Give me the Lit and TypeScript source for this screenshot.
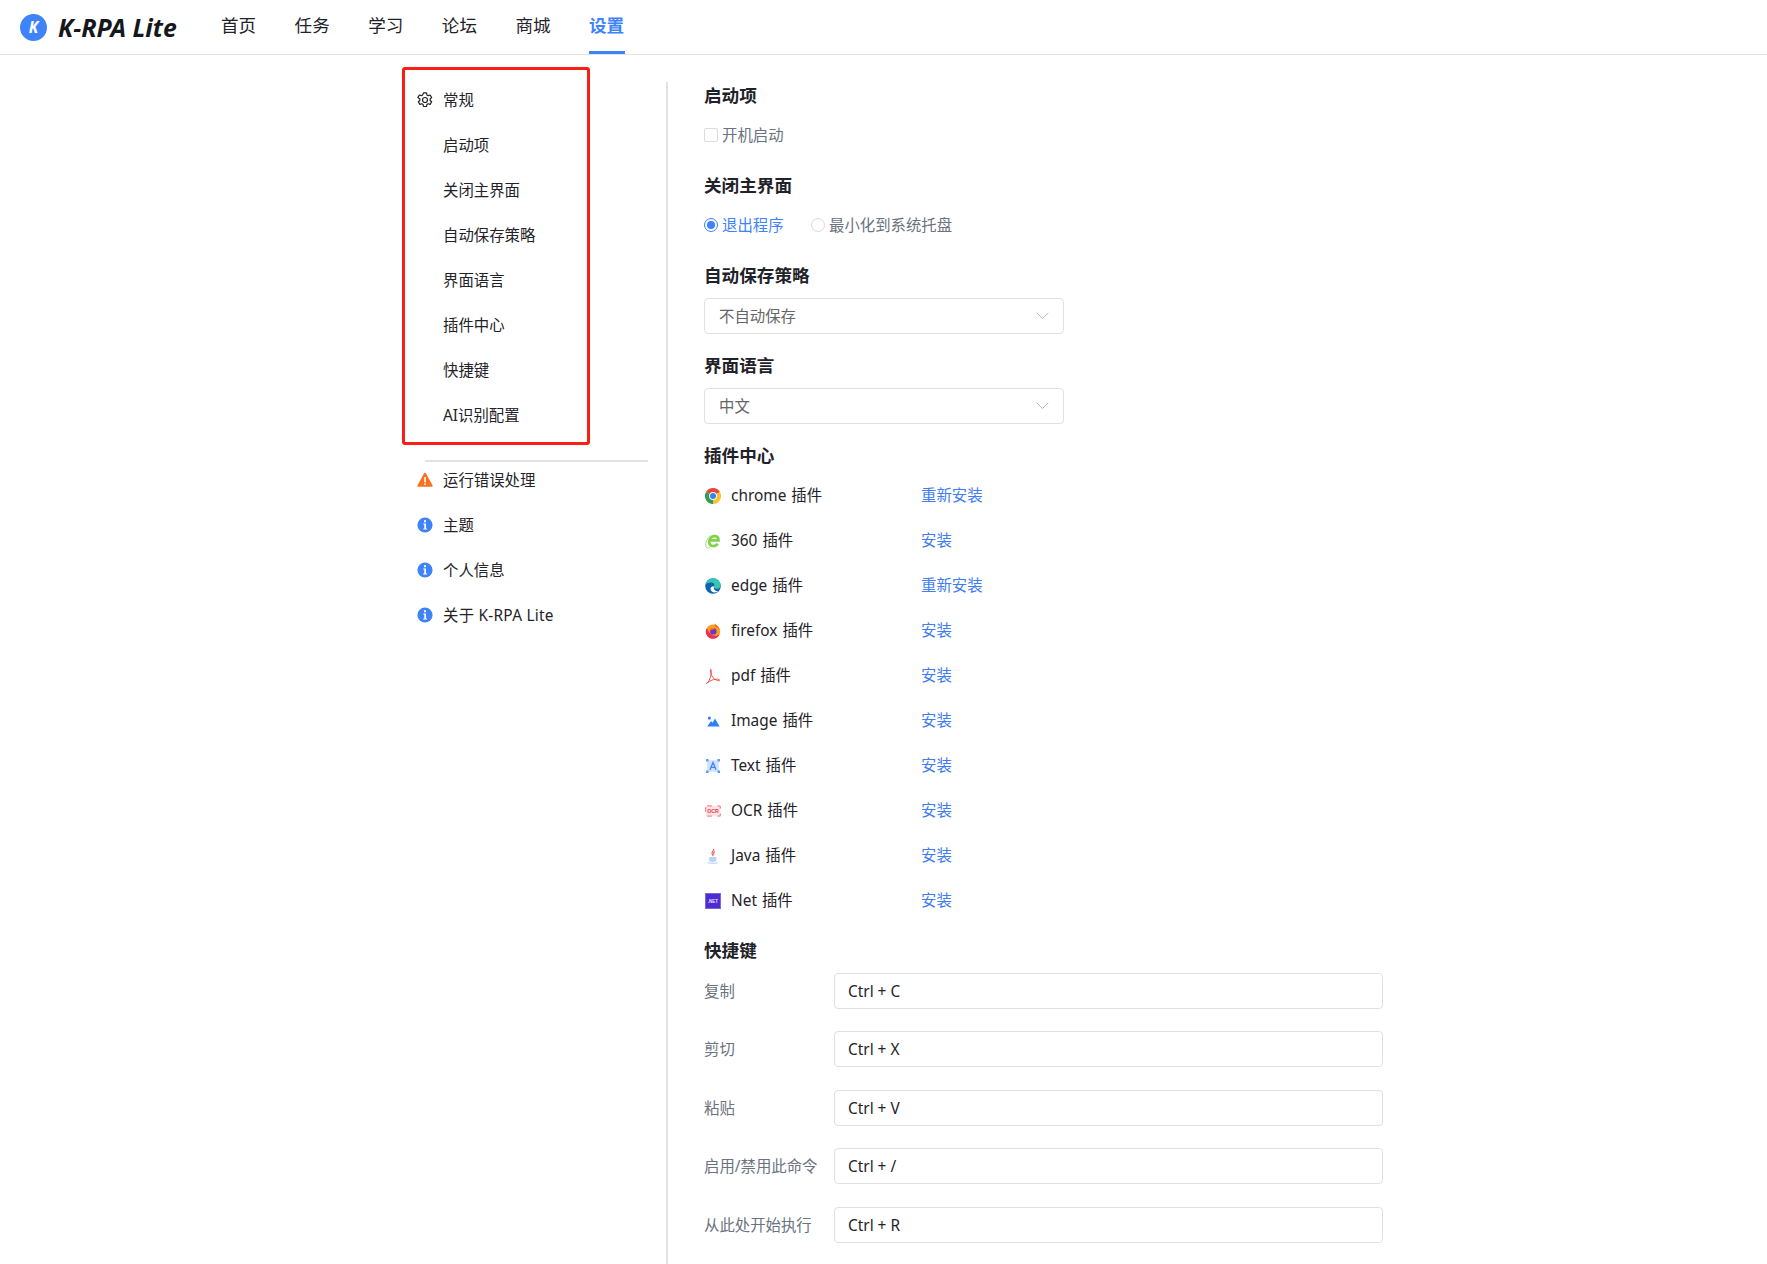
import { LitElement, html, css, svg } from "lit";
import { customElement } from "lit/decorators.js";

const icons: Record<string, any> = {
  gear: svg`<svg class="ni" viewBox="0 0 16 16" fill="none" stroke="#222" stroke-width="1.2" stroke-linejoin="round"><path d="M6.500.9h3l.4 2 1.300.75 1.950-.65 1.500 2.600-1.500 1.350v1.500l1.500 1.350-1.500 2.600-1.950-.65-1.300.75-.4 2h-3l-.4-2-1.300-.75-1.950.65-1.500-2.600 1.500-1.350v-1.500L.85 5.600l1.500-2.600 1.950.65 1.300-.75z"/><circle cx="8" cy="8" r="2.500"/></svg>`,
  warn: svg`<svg class="ni" viewBox="0 0 16 16"><path d="M8 .8c.4 0 .7.2.9.5l6.700 12.200c.3.6-.1 1.300-.8 1.300H1.200c-.7 0-1.100-.7-.8-1.300L7.100 1.300c.2-.3.5-.5.9-.5z" fill="#f9701e"/><rect x="7.200" y="5" width="1.600" height="5.400" fill="#fff"/><rect x="7.200" y="11.400" width="1.600" height="1.600" fill="#fff"/></svg>`,
  info: svg`<svg class="ni" viewBox="0 0 16 16"><circle cx="8" cy="8" r="7.600" fill="#3f83f8"/><rect x="7" y="3.200" width="2" height="2" fill="#fff"/><path d="M6.300 6.400H9v5h1v1.200H6.200v-1.200h1.100V7.600h-1z" fill="#fff"/></svg>`,
  chrome: svg`<svg class="pi" viewBox="0 0 16 16"><path d="M8 8L1.070 4A8 8 0 0 1 14.930 4Z" fill="#e4483a"/><path d="M8 8L14.930 4A8 8 0 0 1 8 16Z" fill="#f9c22e"/><path d="M8 8L8 16A8 8 0 0 1 1.070 4Z" fill="#2f9e50"/><circle cx="8" cy="8" r="3.900" fill="#fff"/><circle cx="8" cy="8" r="3" fill="#3f7de8"/></svg>`,
  ie: svg`<svg class="pi" viewBox="0 0 16 16" fill="none"><path d="M4.500 7.400H13.500C13.500 4.800 12 3.200 9.500 3.200 6.500 3.200 4.200 5.800 4.200 8.800c0 2.700 1.700 4.200 4.200 4.200 1.800 0 3.300-.8 4.100-2.400" stroke="#7ed348" stroke-width="2.700"/><path d="M5.500 2.500C2.200 5 .2 9.800.8 13.400c.3 1.900 2.500 2 4.300 1" stroke="#a5e07d" stroke-width="1"/></svg>`,
  edge: svg`<svg class="pi" viewBox="0 0 16 16"><circle cx="8" cy="8" r="7.800" fill="#0d63ad"/><path d="M.6 6.500C1.800 2.600 4.800.2 8 .2c4.400 0 7.800 3.400 7.800 7.800 0 1.800-1.800 2.800-3.800 2.800-1.800 0-3.200-.8-3.200-1.900 0-.6.600-.9.600-1.800 0-1.500-1.400-2.600-3.400-2.600C4 4.500 1.800 5.200.6 6.500z" fill="#36c6b4"/><path d="M8.800 8.200c-1.800-.2-3.300.8-3.300 2.500 0 2.100 2.200 3.700 4.500 3.700 1.200 0 2.300-.5 3.300-1.400-2.500.6-5-1-4.500-4.800z" fill="#fff"/></svg>`,
  firefox: svg`<svg class="pi" viewBox="0 0 16 16"><circle cx="8" cy="8.600" r="7.200" fill="#f9a11f"/><path d="M.8 8.600a7.200 7.200 0 0 0 14 2.400C12 14 6 13 4 9 3 7 2 6 1.500 5.500 1 6.400.8 7.500.8 8.600z" fill="#ed2f5b"/><path d="M9.800.5c1.800 1.400 4.500 3.500 5 6.500-1-2-3-3-4-3-1-1-1.500-2.200-1-3.500z" fill="#fd6a22"/><circle cx="8.300" cy="8.400" r="3.200" fill="#6e35c9"/><path d="M4.500 6.500c1.500-1.600 4-2 6-.5-1.500-.2-2.500.3-3 1-.8 0-2 .2-3-.5z" fill="#f9701e"/></svg>`,
  pdf: svg`<svg class="pi" viewBox="0 0 16 16" fill="none" stroke="#e8473f" stroke-width=".9"><path d="M5.800 1.200c-.7 0-.6 2.400.2 4.600 1 3 3 5.400 5.500 6.400 2 .8 3.500.6 3.200-.2-.3-.9-3.400-1-6.300-.3-3.300.8-6.200 2.800-6.900 3.500-.8.700.2 1 1.300-.5 1.800-2.400 3.500-7 3.500-11 0-1.500-.2-2.500-.5-2.500z"/></svg>`,
  image: svg`<svg class="pi" viewBox="0 0 16 16" fill="#2f80f6"><path d="M2.200 13.500L6 8l1.500 1.800L10 5.400l4.600 8.100z"/><rect x="3" y="3.700" width="2.700" height="2.700" rx=".5"/></svg>`,
  text: svg`<svg class="pi" viewBox="0 0 16 16"><rect x="2.200" y="2.200" width="11.600" height="11.600" fill="#cfe2fc"/><g fill="#5b9bf8"><rect x="1" y="1" width="2.500" height="2.500"/><rect x="12.500" y="1" width="2.500" height="2.500"/><rect x="1" y="12.500" width="2.500" height="2.500"/><rect x="12.500" y="12.500" width="2.500" height="2.500"/></g><path d="M5 11.800L8 4.500l3 7.300M6.100 9.300h3.800" fill="none" stroke="#3f83f8" stroke-width="1.300"/></svg>`,
  ocr: svg`<svg class="pi" viewBox="0 0 16 16" fill="none"><rect x=".6" y="2.800" width="14.800" height="10.400" rx="1.500" fill="#fde3e6" stroke="#f58a98" stroke-width="1.300" stroke-dasharray="4.800 5.500 4.800 5"/><text x="8" y="10" text-anchor="middle" font-family="Liberation Sans" font-weight="700" font-size="5.200" fill="#e23c52">OCR</text></svg>`,
  java: svg`<svg class="pi" viewBox="0 0 16 16" fill="none"><path d="M8.600.8C9.800 2.500 6.300 3.800 7 5.600c.3.900 1.300 1.200 1 2.500M9.700 3.400C8.300 4.300 8.600 5.500 9.200 6.300" stroke="#e8564c" stroke-width="1.100"/><path d="M4.200 9h7.200v3.600c0 .9-1 1.300-3.600 1.300s-3.600-.4-3.600-1.300z" fill="#b9d2f7"/><path d="M3 14.700c2.500.8 7.500.8 10 0" stroke="#a9c8f6" stroke-width=".9"/></svg>`,
  net: svg`<svg class="pi" viewBox="0 0 16 16"><rect x=".5" y=".5" width="15" height="15" fill="#4f2bd3" stroke="#7b66e0"/><text x="8" y="9.800" text-anchor="middle" font-family="Liberation Sans" font-weight="700" font-size="4.500" fill="#e8e4ff">.NET</text></svg>`,
  chev: svg`<svg class="chev" viewBox="0 0 14 8" fill="none" stroke="#b4b4b4" stroke-width="1"><path d="M.8.8L7 7l6.200-6.200"/></svg>`,
};

const plugins: [string, string, string][] = [
  ["chrome", "chrome 插件", "重新安装"],
  ["ie", "360 插件", "安装"],
  ["edge", "edge 插件", "重新安装"],
  ["firefox", "firefox 插件", "安装"],
  ["pdf", "pdf 插件", "安装"],
  ["image", "Image 插件", "安装"],
  ["text", "Text 插件", "安装"],
  ["ocr", "OCR 插件", "安装"],
  ["java", "Java 插件", "安装"],
  ["net", "Net 插件", "安装"],
];
const keys = [
  ["复制", "Ctrl + C"],
  ["剪切", "Ctrl + X"],
  ["粘贴", "Ctrl + V"],
  ["启用/禁用此命令", "Ctrl + /"],
  ["从此处开始执行", "Ctrl + R"],
];

@customElement("app-root")
export class AppRoot extends LitElement {
  static styles = css`
    :host {
      display: block;
      height: 100vh;
      overflow: hidden;
      background: #fff;
      color: #1f2329;
      font-family: "Noto Sans", "Noto Sans CJK SC", sans-serif;
      font-size: 15.4px;
    }
    * { box-sizing: border-box; }
    .top {
      height: 55px;
      border-bottom: 1px solid #e4e4e4;
      display: flex;
      align-items: stretch;
      padding-left: 20px;
    }
    .brand { display: flex; align-items: center; width: 201px; }
    .logo {
      width: 27px; height: 27px; border-radius: 50%;
      background: #3f83f8; color: #fff; flex: none;
      display: flex; align-items: center; justify-content: center;
      font: italic 700 15.500px "Noto Sans", sans-serif;
    }
    .name {
      margin-left: 11px;
      font: italic 700 24.800px "Noto Sans", sans-serif;
      color: #14171c;
      white-space: nowrap;
    }
    .nav { display: flex; gap: 38px; }
    .nav a {
      width: 35.600px; white-space: nowrap;
      font-size: 17.600px; line-height: 51px; height: 54px;
      color: #1f2329;
    }
    .nav a.on { color: #3f83f8; font-weight: 700; border-bottom: 3px solid #3f83f8; }
    .page { display: flex; padding: 12px 0 0 402px; height: calc(100vh - 55px); }
    .side { width: 264px; flex: none; }
    .box {
      width: 188px; height: 378px;
      border: 3px solid #fb1e14; border-radius: 3px;
      padding: 15px 0 0 0;
      margin-bottom: 15px;
    }
    .row {
      height: 32px; margin-bottom: 13px; padding-bottom: 4px;
      display: flex; align-items: center; white-space: nowrap;
      color: #1f2329;
    }
    .box .row { padding-left: 38px; }
    .box .row .ni { margin-left: -26px; margin-right: 10px; }
    .rest .row { padding-left: 15px; }
    .rest .row .ni { margin-right: 10px; }
    .ni { width: 16px; height: 16px; flex: none; margin-top: 2px; }
    .wide { letter-spacing: .25px; }
    .sep { height: 2px; width: 223px; margin: 0 0 3px 23px; background: #e2e2e2; }
    .rest { display: flex; flex-direction: column; }
    .main {
      margin-top: 15px;
      border-left: 2px solid #e2e2e2;
      padding: 2px 0 0 36px;
      flex: 1;
      display: flex; flex-direction: column; align-items: flex-start;
    }
    h3 {
      margin: 0; height: 24px; line-height: 22px;
      font-size: 17.600px; font-weight: 700; color: #1f2329; white-space: nowrap;
    }
    .check {
      display: flex; align-items: center; height: 24px; margin: 16px 0 26px; padding-bottom: 3px;
      color: #6b7280;
    }
    .cb {
      width: 14px; height: 14px; border: 1px solid #dcdcdc; border-radius: 2px;
      margin-right: 4px; flex: none;
    }
    .rad {
      width: 14px; height: 14px; border: 1px solid #dcdcdc; border-radius: 50%;
      margin-right: 4px; flex: none;
    }
    .rad.on { border-color: #3f83f8; display: flex; align-items: center; justify-content: center; }
    .rad.on::after { content: ""; width: 8px; height: 8px; border-radius: 50%; background: #3f83f8; }
    .radios .lab { width: 69px; margin-right: 20px; color: #3f83f8; white-space: nowrap; }
    .radios .lab.off { color: #6b7280; width: auto; margin: 0; }
    .select {
      width: 360px; height: 36px; margin: 10px 0 20px;
      border: 1px solid #e0e0e0; border-radius: 4px;
      display: flex; align-items: center; justify-content: space-between;
      padding: 0 14px 1px 14px;
      color: #666;
    }
    .chev { width: 13px; height: 7.500px; }
    .plugins { margin-top: 16px; display: flex; flex-direction: column; gap: 21px; margin-bottom: 26px; }
    .pl { display: flex; align-items: center; height: 24px; padding-bottom: 3px; }
    .pi { width: 16px; height: 16px; margin: 3px 10px 0 1px; flex: none; }
    .pl .pn { width: 190px; white-space: nowrap; word-spacing: 1px; }
    .pl a { color: #3f7df0; white-space: nowrap; }
    .keys { margin-top: 10px; display: flex; flex-direction: column; gap: 22px; width: 679px; }
    .k { display: flex; align-items: center; height: 36px; }
    .k:nth-child(3), .k:nth-child(5) { margin-top: 1px; }
    .k label { width: 130px; color: #6b7280; white-space: nowrap; flex: none; padding-bottom: 2px; }
    .inp {
      flex: 1; height: 36px; border: 1px solid #e0e0e0; border-radius: 4px;
      display: flex; align-items: center; padding-left: 13px; color: #1f2329;
    }
  `;

  render() {
    return html`
      <div class="top">
        <div class="brand"><span class="logo">K</span><span class="name">K-RPA Lite</span></div>
        <nav class="nav">
          ${["首页", "任务", "学习", "论坛", "商城"].map((t) => html`<a>${t}</a>`)}
          <a class="on">设置</a>
        </nav>
      </div>
      <div class="page">
        <aside class="side">
          <div class="box">
            <div class="row">${icons.gear}常规</div>
            ${["启动项", "关闭主界面", "自动保存策略", "界面语言", "插件中心", "快捷键", "AI识别配置"].map(
              (t) => html`<div class="row">${t}</div>`
            )}
          </div>
          <div class="sep"></div>
          <div class="rest">
            <div class="row">${icons.warn}运行错误处理</div>
            <div class="row">${icons.info}主题</div>
            <div class="row">${icons.info}个人信息</div>
            <div class="row">${icons.info}<span class="wide">关于 K-RPA Lite</span></div>
          </div>
        </aside>
        <main class="main">
          <h3>启动项</h3>
          <div class="check"><span class="cb"></span>开机启动</div>
          <h3>关闭主界面</h3>
          <div class="check radios">
            <span class="rad on"></span><span class="lab">退出程序</span>
            <span class="rad"></span><span class="lab off">最小化到系统托盘</span>
          </div>
          <h3>自动保存策略</h3>
          <div class="select"><span>不自动保存</span>${icons.chev}</div>
          <h3>界面语言</h3>
          <div class="select"><span>中文</span>${icons.chev}</div>
          <h3>插件中心</h3>
          <div class="plugins">
            ${plugins.map(
              ([i, n, a]) => html`<div class="pl">${icons[i]}<span class="pn">${n}</span><a>${a}</a></div>`
            )}
          </div>
          <h3>快捷键</h3>
          <div class="keys">
            ${keys.map(([l, v]) => html`<div class="k"><label>${l}</label><div class="inp">${v}</div></div>`)}
          </div>
        </main>
      </div>
    `;
  }
}
